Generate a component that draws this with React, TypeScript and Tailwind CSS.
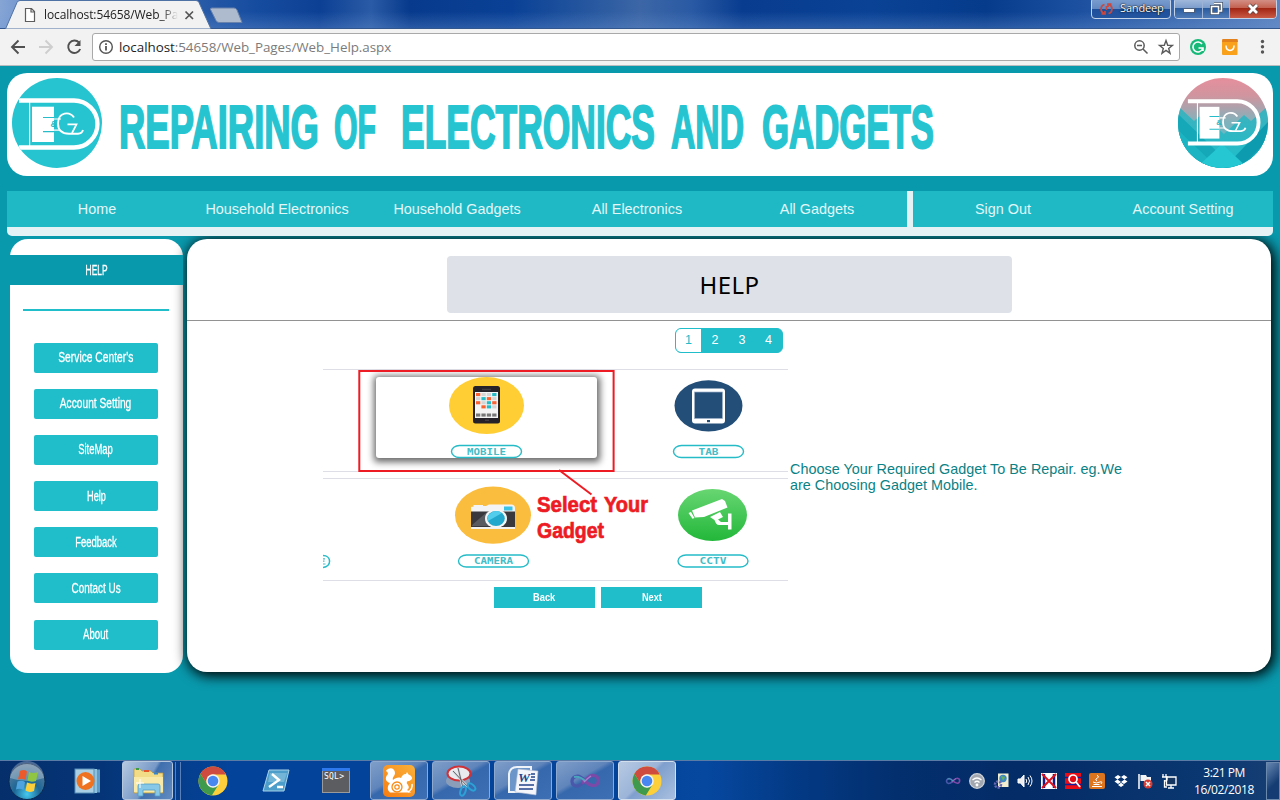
import React from "react";

const seg = "font-['Open_Sans','Noto_Sans',sans-serif]";

function ChromeLogo({ size }: { size: number }) {
  return (
    <svg width={size} height={size} viewBox="0 0 30 30">
      <circle cx="15" cy="15" r="14.5" fill="#fdd03b" />
      <path d="M2.4 7.8L9.3 18.3L15 21.6L20.6 18.5L13.8 29.4A14.5 14.5 0 0 1 2.4 7.8Z" fill="#3f9a4e" />
      <path d="M2.4 7.8A14.5 14.5 0 0 1 27.9 8.4H15A6.6 6.6 0 0 0 9.2 18.2Z" fill="#cf4a3f" />
      <circle cx="15" cy="15" r="6.7" fill="#f4f4f4" />
      <circle cx="15" cy="15" r="5.3" fill="#4886f0" />
    </svg>
  );
}

function VsLogo({ width }: { width: number }) {
  return (
    <svg width={width} height={width / 2} viewBox="0 0 32 16" fill="none">
      <path d="M16 8C12 3 9 2.5 6.500 3.500C1.500 5.500 2 12 7 13C11 13.500 13 11 16 8" stroke="#4a58ac" strokeWidth="3.200" />
      <path d="M13 10.500C18 6 20 2 25 2.500C31 3.500 30.500 12 25 12.500C21 13 18 10 13 6" stroke="#7b4aa8" strokeWidth="3.200" />
      <path d="M5 4C9 3 12 4 16 8" stroke="#4aa6bd" strokeWidth="2" />
      <path d="M15 9Q19 5 22 3" stroke="#a57fd0" strokeWidth="1.500" />
    </svg>
  );
}

function BrandMark() {
  return (
    <g fill="none" stroke="#fff">
      <path d="M7 22.500H62A23.500 23.500 0 0 1 62 69.500H7" strokeWidth="4.300" />
      <path d="M17.600 24V68" strokeWidth="1.200" />
      <rect x="20" y="28.700" width="22" height="35.300" fill="#fff" stroke="none" />
      <path d="M31 39.500H42M31 53.600H42" stroke="#26bcc9" strokeWidth="1.200" />
      <path d="M42 41H49M42 52.200H48" strokeWidth="1.200" />
      <path d="M62 39.500C58 33.500 46.300 33 46 45.500C46 54 52 55.700 57 55.700H66Q70 55.500 71 52" strokeWidth="1.900" />
      <path d="M55.500 46.300H64.500L60 55" strokeWidth="1.700" />
      <text x="38.400" y="49.300" fontSize="8.500" fontFamily="Liberation Sans" fontWeight="700" fill="#26b8c5" stroke="none">&amp;</text>
    </g>
  );
}

function Logo() {
  return (
    <svg className="size-[90px] shrink-0" viewBox="0 0 90 90">
      <defs>
        <clipPath id="lc"><circle cx="45" cy="45" r="45" /></clipPath>
      </defs>
      <circle cx="45" cy="45" r="45" fill="#25c4d0" />
      <g clipPath="url(#lc)"><BrandMark /></g>
    </svg>
  );
}

function SceneLogo() {
  return (
    <svg className="size-[90px] shrink-0" viewBox="0 0 90 90">
      <defs>
        <clipPath id="sc"><circle cx="45" cy="45" r="45" /></clipPath>
        <linearGradient id="sky" x1="0" y1="0" x2="0" y2="1">
          <stop offset="0" stopColor="#e68f9c" />
          <stop offset=".2" stopColor="#cf959f" />
          <stop offset=".5" stopColor="#7fb3bd" />
          <stop offset="1" stopColor="#25c4d0" />
        </linearGradient>
        <linearGradient id="hill" x1="0" y1="0" x2="0" y2="1">
          <stop offset="0" stopColor="#3fb1bd" />
          <stop offset="1" stopColor="#1cbfcb" />
        </linearGradient>
      </defs>
      <g clipPath="url(#sc)">
        <rect width="90" height="90" fill="url(#sky)" />
        <path d="M0 28L16 43L24 36L46 56L66 37L73 43L90 28V90H0Z" fill="url(#hill)" />
        <path d="M0 36L56 90H0Z" fill="#14a8b8" />
        <path d="M0 52L40 90H0Z" fill="#1cb4c2" />
        <path d="M90 44L46 90H90Z" fill="#0d9bb0" />
        <path d="M90 62L62 90H90Z" fill="#19adbc" />
        <path d="M18 90L44 66L70 90Z" fill="#25c8d2" />
        <g transform="translate(3.600 3)"><g transform="scale(.9)"><BrandMark /></g></g>
      </g>
    </svg>
  );
}

function TitleBar() {
  return (
    <div className="relative flex h-[29px] items-end bg-[linear-gradient(90deg,#86a5d5_0%,#6f94cd_2%,#2a5ca8_15%,#164c9f_20%,#0c4094_25%,#2a5ba6_29%,#073a8c_32%,#0a4196_40%,#26579f_46%,#3c66a6_50%,#2a5aa4_54%,#083c8f_58%,#0a4295_68%,#063b8b_77%,#1b4f9f_84%,#5c84c0_100%)]">
      <div className="absolute inset-0 bg-[linear-gradient(transparent_40%,rgba(110,150,210,0.35))]" />
      <div className="absolute inset-x-0 bottom-0 h-px bg-[#32578f]" />
      <svg className="absolute left-0 top-0" width="250" height="29">
        <path d="M5.500 29L17 2.500Q18 .500 20 .500H196Q198 .500 199 2.500L211 29Z" fill="#f2f2f2" stroke="#4f72a5" strokeWidth="1" />
        <path d="M212 8H234Q236 8 237 10L242 22.500H219Q217 22.500 216 20.500L210.500 9.500Q210 8 212 8Z" fill="#aebace" stroke="#6983ac" />
        <path d="M25.500 8.500H31.500L34.500 11.500V21.500H25.500ZM31 8.500V12H34.500" fill="#fff" stroke="#5c5c5c" strokeWidth="1.200" />
        <path d="M185.500 11.500L193 19M193 11.500L185.500 19" stroke="#555" strokeWidth="1.700" />
      </svg>
      <div className={`${seg} relative ml-[44px] mb-[5px] w-[134px] whitespace-nowrap text-[12px] leading-[18px] tracking-[-0.1px] text-[#222] [mask-image:linear-gradient(90deg,#000_88%,transparent)]`}>
        localhost:54658/Web_Pa
      </div>
      <div className="absolute right-[3px] top-[-3px] flex gap-[3px]">
        <div className={`${seg} flex h-[22px] w-[80px] items-center gap-[7px] rounded-[4px] border border-[#c4d3e8] bg-[linear-gradient(#7e9fd0_0%,#6289c2_55%,#1d4f9b_56%,#24559f_100%)] pl-[8px] pt-[1px] text-[11px] tracking-[-0.15px] text-white [text-shadow:0_0_2px_#000,0_0_1px_#000]`}>
          <svg width="13" height="12" viewBox="0 0 13 12" fill="none" stroke="#c9483f" strokeWidth="1.700"><path d="M4.500 1.500C0 2.500 0 9 4 10.500M1.500 11H5V8M8.500 10.500C13 9.500 13 3 9 1.500M11.500 1H8V4M6.500 3V7" /></svg>
          Sandeep
        </div>
        <div className="flex h-[22px] w-[103px] overflow-hidden rounded-[4px] border border-[#c4d3e8]">
          <div className="flex w-[28px] items-center justify-center border-r border-[#9db4d6] bg-[linear-gradient(#a8bfdf_0%,#7c9ccb_50%,#295b9e_51%,#507bb8_100%)]"><div className="mt-[4px] h-[5px] w-[12px] border border-[#4c5f7d] bg-white" /></div>
          <div className="flex w-[27px] items-center justify-center border-r border-[#9db4d6] bg-[linear-gradient(#a8bfdf_0%,#7c9ccb_50%,#295b9e_51%,#507bb8_100%)]">
            <svg width="13" height="13" viewBox="0 0 13 13" fill="none"><path d="M4 1.500H11.500V9H9M1.500 4.500H8.500V11.500H1.500Z" stroke="#42536d" strokeWidth="3" /><path d="M4 1.500H11.500V9H9M1.500 4.500H8.500V11.500H1.500Z" stroke="#fff" strokeWidth="1.500" /></svg>
          </div>
          <div className="flex flex-1 items-center justify-center bg-[linear-gradient(#d69a91_0%,#c4604f_50%,#a12513_51%,#c95a45_100%)]">
            <svg className="mt-[2px]" width="14" height="12" viewBox="0 0 14 12"><path d="M3 2L11 10M11 2L3 10" stroke="#594647" strokeWidth="4.500" /><path d="M3 2L11 10M11 2L3 10" stroke="#fff" strokeWidth="2.800" /></svg>
          </div>
        </div>
      </div>
    </div>
  );
}

function Toolbar() {
  return (
    <div className="flex h-[37px] items-center border-b border-[#b8bcbe] bg-[#f2f2f2]">
      <svg width="92" height="36" fill="none" strokeWidth="1.900" stroke="#505050">
        <path d="M25 18H12.500M18.500 11.500L12 18L18.500 24.500" />
        <path d="M39 18H51.500M45.500 11.500L52 18L45.500 24.500" stroke="#cecece" />
        <path d="M79 13.500A6.200 6.200 0 1 0 80.200 20" />
        <path d="M80.500 11V17H74.500Z" fill="#505050" stroke="none" />
      </svg>
      <div className="flex h-[28px] w-[1088px] items-center rounded-[3px] border border-[#a9a9a9] bg-white pl-[5px] pr-[5px]">
        <svg width="16" height="16" viewBox="0 0 16 16" fill="none" stroke="#555" strokeWidth="1.400"><circle cx="8" cy="8" r="6.300" /><path d="M8 7V11.500M8 4.300V5.900" strokeWidth="1.800" /></svg>
        <div className={`${seg} ml-[5px] flex-1 text-[13.400px] leading-[20px] tracking-[-0.04px] text-[#7b7b7b]`}>
          <span className="text-[#1d1d1d]">localhost</span>:54658/Web_Pages/Web_Help.aspx
        </div>
        <svg width="42" height="18" fill="none" stroke="#5a5a5a" strokeWidth="1.500">
          <circle cx="7.500" cy="7.500" r="4.700" /><path d="M11 11L15.500 15.500M5 7.500H10" />
          <path d="M34 2.500L35.700 7.200L40.500 7.400L36.700 10.400L38 15.200L34 12.400L30 15.200L31.300 10.400L27.500 7.400L32.300 7.200Z" strokeWidth="1.400" />
        </svg>
      </div>
      <svg width="98" height="36" fill="none">
        <circle cx="18" cy="18" r="8" fill="#17b978" />
        <path d="M22 15A5 5 0 1 0 22.500 20M18.500 19H23V22" stroke="#fff" strokeWidth="1.600" />
        <rect x="42" y="10.500" width="15.500" height="15.500" rx="1" fill="#f9a11b" /><path d="M42.500 10H57.500L58 13H42Z" fill="#e3811c" />
        <path d="M46 16.500C46 23 54 23 54 16.500" stroke="#fff" strokeWidth="1.500" />
        <g fill="#555"><circle cx="82.500" cy="12.500" r="1.700" /><circle cx="82.500" cy="17.800" r="1.700" /><circle cx="82.500" cy="23" r="1.700" /></g>
      </svg>
    </div>
  );
}

const titleWords: [string, number, number][] = [
  ["REPAIRING", 2, 200],
  ["OF", 217, 42],
  ["ELECTRONICS", 284, 254],
  ["AND", 554, 73],
  ["GADGETS", 645, 172],
];

function Header() {
  return (
    <header className="mx-[7px] mt-[7px] flex h-[103px] items-center rounded-[20px] bg-white px-[5px] pb-[3px]">
      <Logo />
      <svg className="ml-[15px]" width="830" height="84">
        {titleWords.map(([w, x, len]) => (
          <text key={w} x={x} y="67" textLength={len} lengthAdjust="spacingAndGlyphs" fontFamily="Liberation Sans Narrow, Liberation Sans" fontWeight="700" fontSize="61" fill="#25c4d0" stroke="#25c4d0" strokeWidth="1.900">{w}</text>
        ))}
      </svg>
      <div className="flex-1" />
      <SceneLogo />
    </header>
  );
}

function Nav() {
  const cell = "flex h-[36px] w-[180px] items-center justify-center bg-[#1fb9c6] pt-px";
  return (
    <nav className="relative z-10 mx-[7px] mt-[15px] flex h-[45px] gap-[6px] rounded-b-[5px] bg-[#e4f2f5] font-['Liberation_Sans',sans-serif] text-[14.400px] text-[#e3f7f8]">
      <div className="flex">
        {["Home", "Household Electronics", "Household Gadgets", "All Electronics", "All Gadgets"].map((t) => (
          <a key={t} className={cell}>{t}</a>
        ))}
      </div>
      <div className="flex">
        {["Sign Out", "Account Setting"].map((t) => (
          <a key={t} className={cell}>{t}</a>
        ))}
      </div>
    </nav>
  );
}

const menu: [string, string][] = [
  ["Service Center's", "scale-x-[0.685]"],
  ["Account Setting", "scale-x-[0.68]"],
  ["SiteMap", "scale-x-[0.63]"],
  ["Help", "scale-x-[0.61]"],
  ["Feedback", "scale-x-[0.63]"],
  ["Contact Us", "scale-x-[0.66]"],
  ["About", "scale-x-[0.64]"],
];

function Sidebar() {
  return (
    <aside className="flex h-[434px] w-[173px] flex-col rounded-[18px] bg-white pt-[16px] font-['Liberation_Sans',sans-serif] text-[15px] text-white">
      <div className="relative z-10 flex h-[30px] items-center justify-center bg-[#0999ad]">
        <span className="scale-x-[0.56] [-webkit-text-stroke:0.3px_white]">HELP</span>
      </div>
      <div className="ml-[13px] mt-[24px] h-[2px] w-[146px] bg-[#20bdca]" />
      <div className="ml-[24px] mt-[32px] flex flex-col gap-[16.100px] [-webkit-text-stroke:0.3px_white]">
        {menu.map(([t, s]) => (
          <a key={t} className="flex h-[30px] w-[124px] items-center justify-center whitespace-nowrap rounded-[2px] bg-[#20bdca] pb-px">
            <span className={s}>{t}</span>
          </a>
        ))}
      </div>
    </aside>
  );
}

function Pill({ x, y, w, label, tw }: { x: number; y: number; w: number; label: string; tw: number }) {
  return (
    <g>
      <rect x={x} y={y} width={w} height="12" rx="8" ry="6" fill="#fff" stroke="#25bcc8" strokeWidth="1.400" />
      <text x={x + (w - tw) / 2} y={y + 9.300} textLength={tw} lengthAdjust="spacingAndGlyphs" fontFamily="DejaVu Sans Mono" fontWeight="700" fontSize="8.500" fill="#45bcc6">{label}</text>
    </g>
  );
}

const appDots: [number, number, string][] = [
  [0, 0, "#f96232"], [1, 0, "#d5d5d5"], [2, 0, "#d5d5d5"], [3, 0, "#25bcc8"],
  [0, 1, "#d5d5d5"], [1, 1, "#25bcc8"], [2, 1, "#f96232"], [3, 1, "#d5d5d5"],
  [0, 2, "#f96232"], [1, 2, "#d5d5d5"], [2, 2, "#25bcc8"], [3, 2, "#f96232"],
  [1, 3, "#f96232"], [2, 3, "#25bcc8"], [3, 3, "#d5d5d5"],
  [0, 5, "#777"], [1, 5, "#777"], [2, 5, "#777"], [3, 5, "#777"],
];

function Illustration() {
  return (
    <svg className="block" width="465" height="214" viewBox="323 369 465 214">
      <defs>
        <filter id="sh" x="-20%" y="-30%" width="140%" height="170%"><feGaussianBlur stdDeviation="3.500" /></filter>
        <linearGradient id="gr" x1="0" y1="0" x2="0" y2="1"><stop offset="0" stopColor="#68d672" /><stop offset="1" stopColor="#22b73a" /></linearGradient>
      </defs>
      <path d="M323 369.500H788M323 471.500H788M323 478.500H788M323 580.500H788" stroke="#dedfe6" strokeWidth="1.200" />
      <rect x="359.500" y="371" width="254" height="100" fill="#fff" />
      <rect x="374" y="376" width="226" height="86" rx="3" fill="#000" opacity=".6" filter="url(#sh)" />
      <rect x="376" y="377" width="221" height="81" rx="3" fill="#fff" />
      <rect x="359.300" y="371" width="254.300" height="100" fill="none" stroke="#ed1c24" strokeWidth="2" />
      <ellipse cx="486.500" cy="405.500" rx="37.500" ry="28.500" fill="#ffcd34" />
      <rect x="473" y="386" width="27" height="37.500" rx="2.500" fill="#252329" />
      <path d="M482 389.500H491M485 420.300H489" stroke="#403d44" strokeWidth="1.600" />
      <rect x="475" y="392" width="23" height="26" fill="#f4f4f4" />
      {appDots.map(([c, r, f]) => (
        <rect key={`${c}-${r}`} x={476 + c * 5.400} y={393 + r * 4.100} width="4.300" height="3.100" fill={f} />
      ))}
      <Pill x={451.500} y={445.500} w={70} tw={39} label="MOBILE" />
      <ellipse cx="708.500" cy="405.800" rx="34" ry="25.600" fill="#234e78" />
      <rect x="692" y="388.500" width="33" height="35" rx="3" fill="#fff" />
      <rect x="694.500" y="392" width="28" height="26.500" fill="#234e78" stroke="#9db1c8" strokeWidth=".700" />
      <rect x="707" y="420" width="3" height="2.200" fill="#234e78" />
      <Pill x={673.500} y={445.500} w={70} tw={20} label="TAB" />
      <path d="M559 470L591.500 494.500" stroke="#ed1c24" strokeWidth="2" />
      <ellipse cx="493" cy="515.200" rx="38" ry="28.600" fill="#fbbd3e" />
      <path d="M471 511V507Q474 505.500 486 506L489 504.500H512Q515 505 515 508V513H471ZM473.500 505H483V507H473.500Z" fill="#f3f3f5" />
      <rect x="471" y="511.500" width="44" height="16" fill="#39393d" />
      <path d="M472 525L487 512H492V526H472Z" fill="#595b60" />
      <rect x="471" y="527" width="44" height="2" fill="#f1f1f1" />
      <rect x="504" y="506.500" width="8.500" height="4" fill="#39c2e6" />
      <ellipse cx="496" cy="518.500" rx="11" ry="9.500" fill="#f5f5f5" />
      <ellipse cx="496" cy="518.500" rx="8.800" ry="7.500" fill="#22a8cc" />
      <path d="M488 521A8.800 7.500 0 0 1 502 513Z" fill="#52cdec" />
      <Pill x={458.500} y={555} w={70} tw={39} label="CAMERA" />
      <ellipse cx="712.500" cy="515" rx="34.500" ry="26" fill="url(#gr)" />
      <path d="M692 510.500L722 499L725 501L727.500 507.500L704 517L695 517.500ZM688.500 513L691 512L694.500 518L692.500 518.800ZM710 517L720 512L723 517L718 519.500L721 522H728V513.500H731.500V529.500H728V525H719Q716 525 714.500 520Z" fill="#fff" />
      <Pill x={678} y={555} w={70} tw={27} label="CCTV" />
      <path d="M323 555.500C331.500 555.500 332 566.500 323 567.500" fill="none" stroke="#25bcc8" strokeWidth="1.500" />
      <path d="M323 558.800H325M323 561.200H324.500M323 564H325.500" stroke="#45bcc6" strokeWidth="1.200" />
      <g fontFamily="Liberation Sans Narrow, Liberation Sans" fontWeight="700" fontSize="22.500" fill="#ed1c24" stroke="#ed1c24" strokeWidth=".700">
        <text x="537" y="512" textLength="60" lengthAdjust="spacingAndGlyphs">Select</text>
        <text x="604" y="512" textLength="44" lengthAdjust="spacingAndGlyphs">Your</text>
        <text x="537" y="538" textLength="67" lengthAdjust="spacingAndGlyphs">Gadget</text>
      </g>
    </svg>
  );
}

function MainPanel() {
  return (
    <main className="ml-[4px] flex h-[433px] w-[1084px] flex-col rounded-[20px] bg-white pt-[17px] shadow-[2px_2px_13px_2px_#000] font-['Liberation_Sans',sans-serif]">
      <h1 className="ml-[260px] flex h-[57px] w-[565px] items-center justify-center rounded-[4px] bg-[#dee1e8] font-['Noto_Sans','Open_Sans',sans-serif] text-[24px] tracking-[0.500px] text-black">HELP</h1>
      <div className="mt-[7px] h-px bg-[#929292]" />
      <div className="mx-auto mt-[7px] flex h-[25px] w-[108px] overflow-hidden rounded-[6px] border border-[#20bdca] bg-[#20bdca] text-[12.500px] leading-[22px] text-white">
        <span className="w-[25px] bg-white text-center text-[#20bdca]">1</span>
        <span className="w-[28px] text-center">2</span>
        <span className="w-[26px] text-center">3</span>
        <span className="w-[27px] text-center">4</span>
      </div>
      <div className="ml-[136px] mt-[16px] flex items-center">
        <Illustration />
        <p className="ml-[2px] w-[345px] pt-[2px] text-[14.400px] leading-[16px] tracking-[0.010px] text-[#0a8285]">
          Choose Your Required Gadget To Be Repair. eg.We are Choosing Gadget Mobile.
        </p>
      </div>
      <div className="ml-[307px] mt-[4px] flex gap-[6px] text-[11px] font-bold text-white">
        <button className="h-[21px] w-[101px] bg-[#20bdca]"><span className="inline-block scale-x-[0.84]">Back</span></button>
        <button className="h-[21px] w-[101px] bg-[#20bdca]"><span className="inline-block scale-x-[0.84]">Next</span></button>
      </div>
    </main>
  );
}

function StartOrb() {
  return (
    <svg width="40" height="40" viewBox="0 0 40 40">
      <defs><radialGradient id="orb" cx=".5" cy=".85" r=".8"><stop offset="0" stopColor="#45c9ef" /><stop offset=".45" stopColor="#1d6796" /><stop offset="1" stopColor="#5f7f9d" /></radialGradient></defs>
      <circle cx="20" cy="20.500" r="18" fill="url(#orb)" stroke="#0b2950" />
      <path d="M3 17A17 17 0 0 1 37 17Q20 23 3 17Z" fill="#fff" opacity=".28" />
      <path d="M13 10Q17 8 20 10.500L18.500 19Q15 17 11 18.500Z" fill="#ec5a2c" />
      <path d="M22 11Q26 13 31 11L29 20Q24 21.500 20.500 19.500Z" fill="#8fc543" />
      <path d="M10.500 20.500Q15 19 18 21L16.500 29Q13 27 9 28.500Z" fill="#4fa4e0" />
      <path d="M20 21.500Q24 23.500 28.500 22L27 30Q22 32 18.500 29.500Z" fill="#fbcf3b" />
    </svg>
  );
}

function TaskButton({ active, children }: { active?: boolean; children: React.ReactNode }) {
  return (
    <div
      className={
        active
          ? "flex h-[39px] w-[58px] shrink-0 items-center justify-center rounded-[3px] border border-[#d3dfed] bg-[linear-gradient(135deg,#b7cae3_0%,#9bb4d8_45%,#7f9fcd_50%,#a9c0e0_100%)]"
          : "flex h-[39px] w-[58px] shrink-0 items-center justify-center rounded-[3px] border border-[#8fa9ce] bg-[linear-gradient(150deg,#7f9ec9_0%,#5f85bb_42%,#3568ac_50%,#3d6fb4_100%)]"
      }
    >
      {children}
    </div>
  );
}

function Taskbar() {
  return (
    <footer className="flex h-[40px] items-center border-t border-[#5a7ba5] bg-[linear-gradient(90deg,#052f6b_0%,#053578_8%,#04439a_18%,#04439a_50%,#0648a0_55%,#033a85_62%,#032f6e_70%,#042c66_80%,#0b3872_95%,#173f73_100%)]">
      <div className="ml-[7px] w-[67px]"><StartOrb /></div>
      <svg width="28" height="26" viewBox="0 0 28 26">
        <rect x="6" y="1.500" width="20" height="23" fill="#5d9cc8" /><rect x="4" y="1" width="19" height="24" fill="#8fc2df" /><rect x="1" y="1" width="19" height="24" fill="#a9cfe4" stroke="#598fb8" />
        <circle cx="11.500" cy="13" r="9" fill="#ef7220" /><path d="M8.500 8L17 13L8.500 18Z" fill="#fff" />
      </svg>
      <div className="ml-[20px] flex h-[39px] w-[51px] items-center justify-center rounded-[3px] border border-[#b5c7dd] bg-[linear-gradient(120deg,#b5c9e1_0%,#7799c7_50%,#406fae_55%,#618bc1_100%)]">
        <svg width="34" height="32" viewBox="0 0 34 32">
          <path d="M3 28V4H9L11 6H20L22 8H32V28Z" fill="#f2dc87" stroke="#b99a42" strokeWidth=".700" />
          <path d="M13 6H18" stroke="#e7562b" strokeWidth="2" /><path d="M5 4H8" stroke="#3c9c46" strokeWidth="2" /><path d="M23 8.500H27" stroke="#3185d0" strokeWidth="2" />
          <path d="M3 12H32V27H3Z" fill="#f9e9a8" />
          <path d="M7 31V21Q7 19 9 19H27Q29 19 29 21V31H24V25H12V31Z" fill="#87c8e8" stroke="#4f9cc6" strokeWidth=".800" /><path d="M9 14V23M5 18H13" stroke="#fff" />
        </svg>
      </div>
      <div className="ml-[2px] h-[38px] w-[6px] border-x border-[#5780b8]" />
      <div className="ml-[17px] w-[64px]"><ChromeLogo size={30} /></div>
      <svg width="28" height="24" viewBox="0 0 28 24"><path d="M7 1H27L22 22H1Z" fill="#4c9dc9" stroke="#a9d2e8" /><path d="M8 4H25L22 13H6Z" fill="#73b5d7" /><path d="M10 5L17 11L7 18M15 18H21" fill="none" stroke="#fff" strokeWidth="2.400" /></svg>
      <svg className="ml-[32px]" width="28" height="25" viewBox="0 0 28 25">
        <rect x=".500" y=".500" width="27" height="24" fill="#5c5d60" stroke="#9a9a9a" /><rect width="28" height="3" fill="#2e79ed" />
        <text x="2" y="11" fontFamily="DejaVu Sans Mono" fontSize="8" textLength="20" fill="#fff">SQL&gt;</text>
      </svg>
      <div className="ml-[20px] flex gap-[4px]">
        <TaskButton>
          <svg width="32" height="32" viewBox="0 0 32 32">
            <defs><linearGradient id="uc" x1="0" y1="1" x2="1" y2="0"><stop offset="0" stopColor="#f77c10" /><stop offset="1" stopColor="#fbb13a" /></linearGradient></defs>
            <rect width="32" height="32" rx="5" fill="url(#uc)" />
            <path d="M3 6C5 2 12 2 12 8C12 11 9 12 10 15C12 13 15 12 18 13C19 11 20 9 23 9L24 7L25.500 9.500Q29.500 11 29 14Q27 16 24 16.500Q23 18 25 20Q27 23 24 25L28 27.500H7C4 25 4 21 7 18C3 17 1 13 5 9Q5 7 3 6Z" fill="#fff" />
            <path d="M25 27Q30 24 29 19" fill="none" stroke="#fff" strokeWidth="1.500" />
            <circle cx="14" cy="22" r="5" fill="none" stroke="#f98b16" strokeWidth="1.300" /><circle cx="14" cy="22" r="2.200" fill="none" stroke="#f98b16" strokeWidth="1.200" />
          </svg>
        </TaskButton>
        <TaskButton>
          <svg width="32" height="32" viewBox="0 0 32 32" fill="none"><ellipse cx="13" cy="16" rx="12" ry="7" fill="#8a9eb9" /><ellipse cx="14" cy="8.500" rx="11.500" ry="7" fill="#e9eaf0" stroke="#d03237" strokeWidth="2" /><path d="M8 6L23 22M13 3L18 23" stroke="#d9dbe0" strokeWidth="2.500" /><path d="M8 6L23 22M13 3L18 23" stroke="#53565d" strokeWidth=".900" /><ellipse cx="18" cy="26" rx="2.500" ry="4.800" transform="rotate(20 18 26)" stroke="#2ba1d6" strokeWidth="2" /><ellipse cx="26.500" cy="22" rx="2.500" ry="4.500" transform="rotate(-50 26.500 22)" stroke="#2ba1d6" strokeWidth="2" /></svg>
        </TaskButton>
        <TaskButton>
          <svg width="32" height="32" viewBox="0 0 32 32"><path d="M2 27V9Q3 2 10 2H24V27Z" fill="#6c96ca" stroke="#eef3f9" strokeWidth="2" /><path d="M11 4L31 6L29 30L8 27Z" fill="#f4f6fb" stroke="#a7b5cd" strokeWidth=".600" /><path d="M24 9H28M24 12H28M23 15H28M12 20H27M12 24H26" stroke="#23468a" strokeWidth="1.700" /><text x="11" y="17" fontFamily="Liberation Serif" fontWeight="700" fontStyle="italic" fontSize="13" textLength="12" lengthAdjust="spacingAndGlyphs" fill="#23468a">W</text></svg>
        </TaskButton>
        <TaskButton><VsLogo width={32} /></TaskButton>
        <TaskButton active><ChromeLogo size={30} /></TaskButton>
      </div>
      <div className="flex-1" />
      <div className="flex items-center gap-[8px]">
        <VsLogo width={16} />
        <svg width="16" height="16" viewBox="0 0 16 16" fill="none" stroke="#fff" strokeWidth="1.300"><circle cx="8" cy="8" r="7.300" fill="#a3a8b0" stroke="#cfd3d9" /><path d="M3.500 7Q8 3 12.500 7M5.500 9.500Q8 7 10.500 9.500" /><circle cx="8" cy="12" r=".800" /></svg>
        <svg width="16" height="16" viewBox="0 0 16 16"><path d="M5 .500H15.500V14H5Z" fill="#f2edcf" /><circle cx="10" cy="5.500" r="3.700" fill="#3c87c2" /><path d="M8 3L12 4L10 8Z" fill="#69b254" /><circle cx="5" cy="11.500" r="3" fill="none" stroke="#6969b4" strokeWidth="2.500" strokeDasharray="2 1" /></svg>
        <svg width="16" height="16" viewBox="0 0 16 16" fill="none" stroke="#fff"><path d="M1 6H3.500L7 2V14L3.500 10H1Z" fill="#eee" /><path d="M9 6Q10.500 8 9 10M11 4Q14 8 11 12M13 2.500Q17 8 13 13.500" /></svg>
        <svg width="16" height="16" viewBox="0 0 16 16" fill="none"><rect width="16" height="16" fill="#fff" /><path d="M3 1V15M13 1V15" stroke="#171d85" strokeWidth="2.500" /><path d="M1 1L15 15M15 1L1 15" stroke="#db1420" strokeWidth="2" /></svg>
        <svg width="16" height="16" viewBox="0 0 16 16" fill="none"><rect width="16" height="16" fill="#ea0d16" /><path d="M0 4.500H16M0 11.500H16" stroke="#171d9a" strokeWidth="1.500" /><circle cx="8" cy="6" r="4" fill="#e00b14" stroke="#fff" strokeWidth="1.700" /><path d="M11 9L15 14" stroke="#fff" strokeWidth="1.800" /></svg>
        <svg width="16" height="16" viewBox="0 0 16 16" fill="none" stroke="#fff"><rect width="16" height="16" rx="2" fill="#dd741e" stroke="none" /><path d="M8 2Q11 4 7 6Q6 7 8 8M4 9Q7 11 11 9M4.500 11.500H10.500M3 13.500H13M11 9Q14 8 12 11" /></svg>
        <svg width="16" height="16" viewBox="0 0 16 16" fill="#fff"><path d="M5 2L8 4L4.500 6.500L1.500 4.300ZM11 2L14.500 4.300L11.500 6.500L8 4ZM1.500 8.500L4.500 6.500L8 9L5 11ZM11.500 6.500L14.500 8.500L11 11L8 9ZM8 9.700L11 12L8 14L5 12Z" /></svg>
        <svg width="16" height="16" viewBox="0 0 16 16" fill="none"><path d="M2 1V16" stroke="#fff" strokeWidth="1.500" /><path d="M3.500 2H9L10 4H14V10H8L7 8H3.500Z" fill="#f4f4f4" /><circle cx="11" cy="11" r="4.500" fill="#d73d35" /><path d="M9 9L13 13M13 9L9 13" stroke="#fff" strokeWidth="1.500" /></svg>
        <svg width="16" height="16" viewBox="0 0 16 16" fill="none" stroke="#fff" strokeWidth="1.300"><path d="M5.500 4H15V12H5.500ZM10 12V15M7 15H13" fill="#17365f" /><path d="M2 1V4M5 1V4M1 4H6V7Q3.500 9 3.500 7V14H6" /></svg>
      </div>
      <div className={`${seg} ml-[11px] w-[72px] text-center text-[12px] leading-[17px] tracking-[-0.500px] text-white`}>
        <div>3:21 PM</div>
        <div className="tracking-[-0.350px]">16/02/2018</div>
      </div>
      <div className="ml-[6px] h-[38px] w-[14px] border border-[#6b89ad] bg-[linear-gradient(135deg,#6686b1,#153d73_60%)]" />
    </footer>
  );
}

export default function App() {
  return (
    <div className="flex h-[800px] w-[1280px] flex-col overflow-hidden bg-[#0999ad]">
      <TitleBar />
      <Toolbar />
      <Header />
      <Nav />
      <div className="ml-[10px] mt-[3px] flex flex-1 items-start">
        <Sidebar />
        <MainPanel />
      </div>
      <Taskbar />
    </div>
  );
}
